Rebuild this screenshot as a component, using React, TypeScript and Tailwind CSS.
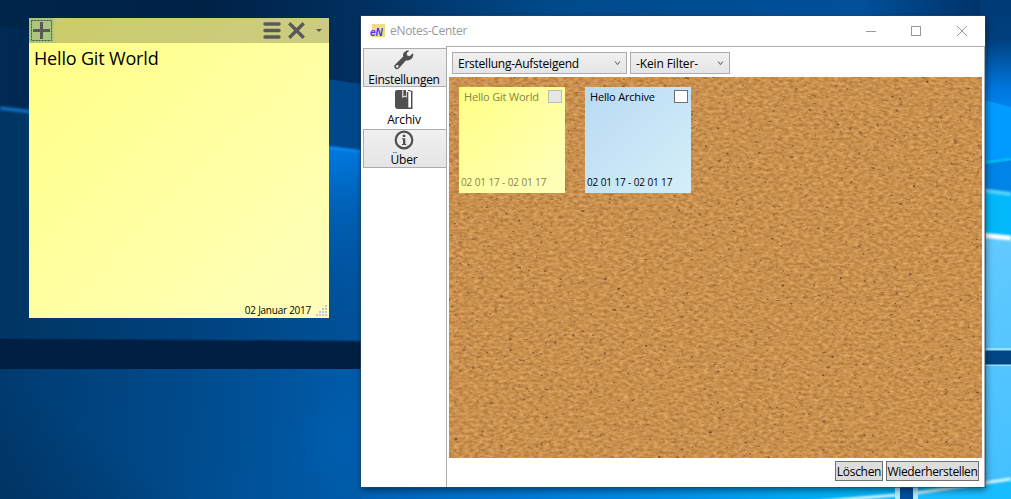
import React from "react";

function Wallpaper() {
  return (
    <svg className="absolute inset-0" width="1011" height="499" viewBox="0 0 1011 499" aria-hidden="true">
      <defs>
        <linearGradient id="sky" x1="0" x2="1011" y1="0" y2="0" gradientUnits="userSpaceOnUse">
          <stop offset="0" stopColor="#00254b" />
          <stop offset="0.2" stopColor="#002146" />
          <stop offset="0.36" stopColor="#003060" />
          <stop offset="0.55" stopColor="#004a8c" />
          <stop offset="0.85" stopColor="#00509a" />
          <stop offset="1" stopColor="#002b5c" />
        </linearGradient>
        <linearGradient id="mid" x1="0" x2="361" y1="0" y2="0" gradientUnits="userSpaceOnUse">
          <stop offset="0" stopColor="#003562" />
          <stop offset="0.5" stopColor="#00417c" />
          <stop offset="1" stopColor="#00529a" />
        </linearGradient>
        <linearGradient id="beam" x1="0" x2="0" y1="150" y2="340" gradientUnits="userSpaceOnUse">
          <stop offset="0" stopColor="#0078e0" />
          <stop offset="0.25" stopColor="#0064bc" />
          <stop offset="1" stopColor="#004f98" stopOpacity="0" />
        </linearGradient>
        <linearGradient id="low" x1="0" x2="361" y1="400" y2="430" gradientUnits="userSpaceOnUse">
          <stop offset="0" stopColor="#003b70" />
          <stop offset="0.5" stopColor="#004a8b" />
          <stop offset="1" stopColor="#005cab" />
        </linearGradient>
        <linearGradient id="fade" x1="60" x2="0" y1="410" y2="499" gradientUnits="userSpaceOnUse">
          <stop offset="0" stopColor="#002b55" stopOpacity="0" />
          <stop offset="1" stopColor="#002b55" stopOpacity="0.45" />
        </linearGradient>
        <linearGradient id="rightTop" x1="0" x2="0" y1="0" y2="110" gradientUnits="userSpaceOnUse">
          <stop offset="0" stopColor="#003a76" />
          <stop offset="0.35" stopColor="#003f7e" />
          <stop offset="0.8" stopColor="#0076dd" />
          <stop offset="1" stopColor="#0084ee" />
        </linearGradient>
        <linearGradient id="pane" x1="0" x2="0" y1="235" y2="499" gradientUnits="userSpaceOnUse">
          <stop offset="0" stopColor="#62caff" />
          <stop offset="1" stopColor="#42c0ff" />
        </linearGradient>
        <linearGradient id="foot" x1="361" x2="1011" y1="0" y2="0" gradientUnits="userSpaceOnUse">
          <stop offset="0" stopColor="#0060b4" />
          <stop offset="0.25" stopColor="#0078d4" />
          <stop offset="0.5" stopColor="#0091e8" />
          <stop offset="0.75" stopColor="#00b4fa" />
          <stop offset="1" stopColor="#10bcff" />
        </linearGradient>
        <filter id="soft" filterUnits="userSpaceOnUse" x="0" y="0" width="1011" height="499">
          <feGaussianBlur stdDeviation="1.2" />
        </filter>
        <filter id="haze" filterUnits="userSpaceOnUse" x="0" y="0" width="1011" height="499">
          <feGaussianBlur stdDeviation="12" />
        </filter>
      </defs>
      <rect width="1011" height="499" fill="url(#sky)" />
      <path d="M0 26L361 84V345H0Z" fill="#003c72" opacity="0.2" />
      <path d="M320 78L361 84V160H320Z" fill="#004b8f" opacity="0.9" />
      <path d="M0 109L361 153V345H0Z" fill="url(#mid)" />
      <path d="M320 148L361 153V345H320Z" fill="url(#beam)" />
      <path d="M0 108L361 152" stroke="#0867b8" strokeWidth="4" filter="url(#soft)" />
      <path d="M325 147.500L361 152" stroke="#058cff" strokeWidth="3" filter="url(#soft)" />
      <path d="M0 338L361 341V369H0Z" fill="#001f42" />
      <path d="M0 338L361 341" stroke="#003970" strokeWidth="2" opacity="0.6" />
      <rect y="369" width="361" height="130" fill="url(#low)" />
      <rect y="369" width="361" height="130" fill="url(#fade)" />
      <ellipse cx="333" cy="440" rx="22" ry="36" fill="#0065bb" opacity="0.35" filter="url(#haze)" />
      <rect x="361" y="480" width="650" height="19" fill="url(#foot)" />
      <rect x="980" width="31" height="120" fill="url(#rightTop)" />
      <path d="M980 99L1011 107V163L980 163Z" fill="#009bff" />
      <path d="M980 163L1011 159V200H980Z" fill="#0085e6" />
      <path d="M980 163L1011 159" stroke="#00b5f5" strokeWidth="3" />
      <path d="M980 190L1011 194V240H980Z" fill="#00b8fa" />
      <path d="M980 190L1011 194" stroke="#58d1fa" strokeWidth="4" filter="url(#soft)" />
      <path d="M980 235L1011 238V499H980Z" fill="url(#pane)" />
      <path d="M980 235L1011 238" stroke="#fff" strokeWidth="5" filter="url(#soft)" />
      <rect x="980" y="348" width="31" height="18" fill="#9ce0ff" />
      <rect x="980" y="350.5" width="31" height="14" fill="#004686" />
      <path d="M916 490L1011 479V499H916Z" fill="#18bdff" />
      <path d="M790 504L897 495M916 493L1011 479" stroke="#d9f7ff" strokeWidth="3" filter="url(#soft)" />
      <path d="M895 480H918V499H895Z" fill="#b3ebff" />
      <path d="M900 480H913V499H900Z" fill="#0050a0" />
    </svg>
  );
}

function Cork() {
  return (
    <svg className="absolute inset-0 h-full w-full" aria-hidden="true">
      <filter id="cork" x="0" y="0" width="100%" height="100%" colorInterpolationFilters="sRGB">
        <feTurbulence type="fractalNoise" baseFrequency="0.2 0.36" numOctaves="3" seed="7" result="n" />
        <feColorMatrix
          in="n"
          values="0.3 0 0 0 0.64  0.3 0 0 0 0.415  0.26 0 0 0 0.18  0 0 0 0 1"
          result="base"
        />
        <feTurbulence type="fractalNoise" baseFrequency="0.22 0.28" numOctaves="2" seed="21" />
        <feColorMatrix values="0 0 0 0 0.42  0 0 0 0 0.29  0 0 0 0 0.16  0 5 0 0 -3.45" result="specks" />
        <feMerge>
          <feMergeNode in="base" />
          <feMergeNode in="specks" />
        </feMerge>
      </filter>
      <rect width="100%" height="100%" filter="url(#cork)" />
    </svg>
  );
}

function StickyNote() {
  return (
    <section className="absolute left-[29px] top-[18px] flex h-[300px] w-[300px] flex-col bg-linear-to-br from-[#ffff82] to-[#ffffbc] text-black">
      <header className="flex h-[25px] shrink-0 items-center bg-black/20">
        <button className="flex size-[25px] items-center justify-center bg-[#60b8a8]/30" aria-label="Neu">
          <svg width="25" height="25" viewBox="0 0 25 25">
            <rect x="2.5" y="2.5" width="20" height="20" fill="none" stroke="#484f3b" strokeDasharray="2 1" />
            <path d="M12.5 4V21M4 12.5H21" stroke="#595959" strokeWidth="3" />
          </svg>
        </button>
        <svg className="ml-auto" width="70" height="25" viewBox="0 0 70 25" fill="none" stroke="#595959">
          <path d="M6 6H20M6 12.5H20M6 19H20" strokeWidth="3.4" strokeLinecap="round" />
          <path d="M31.5 6.5L43.5 18.5M43.5 6.5L31.5 18.5" strokeWidth="3.4" strokeLinecap="square" />
          <path d="M57 11H63L60 14Z" fill="#595959" stroke="none" />
        </svg>
      </header>
      <p className="grow whitespace-nowrap pl-[5px] pt-[3px] text-[18px] leading-[25px] tracking-[-0.17px]">Hello Git World</p>
      <footer className="flex h-[15px] items-center justify-end gap-[5px] pr-[1px]">
        <span className="whitespace-nowrap text-[10px] leading-[15px] tracking-[-0.25px]">02 Januar 2017</span>
        <svg width="12" height="12" viewBox="0 0 12 12" fill="#c3c3da">
          <path d="M0 9h2v2H0zM3 9h2v2H3zM6 9h2v2H6zM9 9h2v2H9zM3 6h2v2H3zM6 6h2v2H6zM9 6h2v2H9zM6 3h2v2H6zM9 3h2v2H9zM9 0h2v2H9z" />
        </svg>
      </footer>
    </section>
  );
}

function WrenchIcon() {
  return (
    <svg className="shrink-0" width="20" height="20" viewBox="0 0 20 20" fill="#505050">
      <path d="M18.9 3.2L15.6 6.2L13 5.3L12.7 3.3L15.3 .6C12.8-.1 10.2 1.2 9.2 3.7C8.9 4.6 9 5.8 9.3 6.6L.9 14.7C-.1 15.8 0 17.6 1.2 18.6C2.3 19.6 4 19.4 5 18.3L12.1 10.2C14.5 10.9 17.2 9.6 18.5 7.5C19.3 6 19.4 4.5 18.9 3.2ZM4.2 17.3C3.5 18 2.4 17.8 2 17C1.7 16.2 2.2 15.2 3.2 15.1C4.5 15.1 5 16.5 4.2 17.3Z" />
    </svg>
  );
}

function ArchiveIcon() {
  return (
    <svg className="shrink-0" width="18" height="20" viewBox="0 0 18 20">
      <path d="M2 0H7.300V8.300L9.500 6.800L11.700 8.300V2H13.300V17.500H16V1.800L12.800 .8V0H14L17.500 1V19H3C1 19 0 18 0 16V2C0 1 1 0 2 0Z" fill="#505050" />
      <path d="M7.300 8L9.500 6.800L12.500 8V18H7.300Z" fill="#505050" />
      <path d="M8.300 0H11V6.500L9.600 5.500L8.300 6.500Z" fill="#505050" />
    </svg>
  );
}

function InfoIcon() {
  return (
    <svg className="shrink-0" width="20" height="20" viewBox="0 0 20 20">
      <circle cx="10" cy="10" r="8.3" fill="none" stroke="#505050" strokeWidth="2.2" />
      <path d="M8.8 4.8H11.3V7H8.8ZM8 8.3H11.3V14H12.3V15H8V14H9V9.3H8Z" fill="#505050" />
    </svg>
  );
}

function Sidebar() {
  return (
    <nav className="flex w-[86px] shrink-0 flex-col pt-[2px] text-[12px] leading-[16px]">
      <button className="ml-[2px] flex h-[39px] flex-col items-center border border-[#acacac] bg-linear-to-b from-[#f0f0f0] to-[#e5e5e5] pt-[1px] pr-[2px]">
        <WrenchIcon />
        <span className="mt-[2px] whitespace-nowrap tracking-[-0.3px]">Einstellungen</span>
      </button>
      <button className="flex h-[42px] flex-col items-center bg-white pt-[3px]">
        <ArchiveIcon />
        <span className="mt-[2px] whitespace-nowrap tracking-[-0.15px]">Archiv</span>
      </button>
      <button className="ml-[2px] flex h-[39px] flex-col items-center border border-[#acacac] bg-linear-to-b from-[#f0f0f0] to-[#e5e5e5] pr-[2px]">
        <InfoIcon />
        <span className="mt-[2px] whitespace-nowrap tracking-[-0.15px]">Über</span>
      </button>
    </nav>
  );
}

function Combo({ label, className }: { label: string; className: string }) {
  return (
    <div className={"flex h-[22px] items-center justify-between border border-[#acacac] bg-linear-to-b from-[#f0f0f0] to-[#e5e5e5] pl-[5px] pr-[5px] " + className}>
      <span className="whitespace-nowrap pt-[2px]">{label}</span>
      <svg width="7" height="5" viewBox="0 0 7 5" fill="none" stroke="#707070" strokeWidth="1.1">
        <path d="M1 .5L3.5 3.5L6 .5" />
      </svg>
    </div>
  );
}

function Card({ title, className, boxClass }: { title: string; className: string; boxClass: string }) {
  return (
    <article className={"relative flex size-[106px] flex-col justify-between bg-linear-to-br " + className}>
      <div className="flex items-start justify-between pl-[5px] pr-[3px] pt-[3px]">
        <span className="-mt-px whitespace-nowrap text-[11px] leading-[15px] tracking-[-0.19px]">{title}</span>
        <span className={"h-[13px] w-[14px] border " + boxClass} />
      </div>
      <span className="whitespace-nowrap pb-[4px] pl-[2px] text-[10px] leading-[14px] tracking-[-0.11px]">02 01 17 - 02 01 17</span>
    </article>
  );
}

function NotesCenter() {
  return (
    <main className="absolute left-[361px] top-[16px] flex h-[471px] w-[624px] flex-col bg-white text-black shadow-[0_0_0_1px_#27466d99,1px_3px_7px_#00000080]">
      <header className="flex h-[30px] shrink-0 items-center pl-[9px]">
        <svg width="15" height="14" viewBox="0 0 15 14">
          <rect x="2" width="13" height="13" fill="#f5dc7a" />
          <text x="0" y="12" fontFamily="Liberation Sans" fontSize="10" fontWeight="bold" fontStyle="italic" fill="#3535ff">eN</text>
        </svg>
        <h1 className="ml-[5px] whitespace-nowrap text-[12px] tracking-[-0.32px] text-[#999]">eNotes-Center</h1>
        <svg className="ml-auto mr-[17px]" width="103" height="12" viewBox="0 0 103 12" fill="none" stroke="#999">
          <path d="M1 6.5H11" />
          <rect x="46.5" y="1.5" width="9" height="9" />
          <path d="M92 1L102 11M102 1L92 11" />
        </svg>
      </header>
      <div className="flex min-h-0 grow">
        <Sidebar />
        <div className="-ml-px flex grow flex-col border-l border-r border-t border-[#acacac] pl-[2px] pr-[2px]">
          <div className="flex h-[30px] shrink-0 gap-[3px] pl-[3px] pt-[5px] text-[12px]">
            <Combo label="Erstellung-Aufsteigend" className="w-[175px] tracking-[-0.24px]" />
            <Combo label="-Kein Filter-" className="w-[100px] tracking-[-0.12px]" />
          </div>
          <div className="relative h-[381px] shrink-0 overflow-hidden bg-[#cb9150]">
            <Cork />
            <div className="relative flex gap-[20px] pl-[10px] pt-[10px]">
              <Card title="Hello Git World" className="from-[#ffff82] to-[#ffffbc] text-[#84844c]" boxClass="border-[#bcbcbc] bg-[#e6e6e6]" />
              <Card title="Hello Archive" className="from-[#b9daf3] to-[#d4eff9] text-black" boxClass="border-[#707070] bg-white" />
            </div>
          </div>
          <div className="flex justify-end gap-[3px] pr-[3px] pt-[3px] text-[12px]">
            <button className="flex h-[20px] w-[48px] items-center justify-center whitespace-nowrap border border-[#707070] bg-[#ddd] pt-[2px] tracking-[-0.3px]">Löschen</button>
            <button className="flex h-[20px] w-[93px] items-center justify-center whitespace-nowrap border border-[#707070] bg-[#ddd] pt-[2px] tracking-[-0.36px]">Wiederherstellen</button>
          </div>
        </div>
      </div>
    </main>
  );
}

export default function App() {
  return (
    <div className="relative h-[499px] w-[1011px] overflow-hidden font-['Open_Sans','Noto_Sans',sans-serif]">
      <Wallpaper />
      <StickyNote />
      <NotesCenter />
    </div>
  );
}
